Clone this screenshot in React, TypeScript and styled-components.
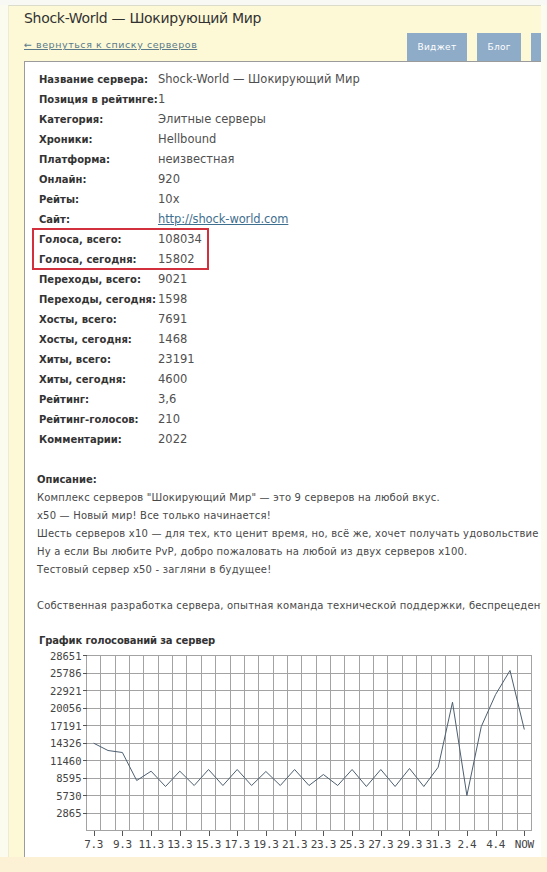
import React from "react";
import styled, { createGlobalStyle } from "styled-components";

const GlobalStyle = createGlobalStyle`
  html, body {
    margin: 0;
    padding: 0;
    background: #fdf1d5;
  }
  body {
    font-family: "DejaVu Sans", Verdana, sans-serif;
  }
`;

const Page = styled.div`
  width: 547px;
  padding: 5px 0 0 8px;
  box-sizing: border-box;
  background: linear-gradient(#f8f8f4 0 5px, #fcfbef 5px);
  overflow: hidden;
`;

const Sheet = styled.div`
  width: 533px;
  box-sizing: border-box;
  background: #fdf9d6;
  border-top: 1px solid #dcdccc;
  border-left: 1px solid #ecebd6;
  padding-left: 15px;
  overflow: hidden;
`;

const Header = styled.div`
  display: flex;
  align-items: flex-end;
`;

const TitleBlock = styled.div`
  flex: 0 0 383px;
  padding-top: 3px;
`;

const Title = styled.h1`
  margin: 0;
  font-size: 14px;
  line-height: 18px;
  font-weight: normal;
  color: #333;
  font-family: "DejaVu Sans", Verdana, sans-serif;
  letter-spacing: -0.3px;
`;

const BackLink = styled.a`
  display: block;
  margin: 11px 0 9px;
  font-size: 9.5px;
  line-height: 14px;
  color: #5a7a8c;
  text-decoration: underline;
  letter-spacing: 0.55px;
`;

const Tabs = styled.div`
  display: flex;
  gap: 10px;
  flex-shrink: 0;
`;

const Tab = styled.div`
  height: 28px;
  padding: 0 10.5px;
  display: flex;
  align-items: center;
  background: #8eabc7;
  color: #fff;
  font-size: 9px;
  letter-spacing: 0.3px;
  white-space: nowrap;
`;

const Panel = styled.div`
  width: 517px;
  box-sizing: border-box;
  background: #fff;
  border-top: 1px solid #9b9b9b;
  border-left: 1px solid #9b9b9b;
  padding: 7px 0 0 12px;
  overflow: hidden;
`;

const Row = styled.div`
  display: flex;
  height: 20px;
  align-items: center;
  padding-left: 2px;
`;

const Label = styled.div`
  width: 119px;
  flex-shrink: 0;
  font-size: 10px;
  font-weight: bold;
  color: #333;
  white-space: nowrap;
`;

const Value = styled.div`
  font-size: 11.5px;
  color: #505050;
  white-space: nowrap;
`;

const SiteLink = styled.a`
  color: #3f6f8f;
  text-decoration: underline;
  letter-spacing: -0.1px;
`;

const Highlight = styled.div`
  width: 175px;
  margin-left: -4px;
  padding-left: 4px;
  outline: 2px solid #d2303c;
  outline-offset: -1px;
  box-sizing: border-box;
`;

const Description = styled.div`
  margin-top: 22px;
  font-size: 10px;
  line-height: 18px;
  color: #484848;
  white-space: nowrap;
  letter-spacing: 0.2px;
`;

const SectionTitle = styled.div`
  font-size: 10px;
  font-weight: bold;
  color: #333;
  letter-spacing: 0;
`;

const ChartTitle = styled(SectionTitle)`
  margin-top: 19px;
  padding-left: 2px;
  line-height: 14px;
  letter-spacing: -0.15px;
`;

const ChartSvg = styled.svg`
  display: block;
  margin-left: 2px;
`;

type Info = { label: string; value: React.ReactNode };

const info: Info[] = [
  { label: "Название сервера:", value: "Shock-World — Шокирующий Мир" },
  { label: "Позиция в рейтинге:", value: "1" },
  { label: "Категория:", value: "Элитные серверы" },
  { label: "Хроники:", value: "Hellbound" },
  { label: "Платформа:", value: "неизвестная" },
  { label: "Онлайн:", value: "920" },
  { label: "Рейты:", value: "10x" },
  { label: "Сайт:", value: <SiteLink href="#">http://shock-world.com</SiteLink> },
];

const votes: Info[] = [
  { label: "Голоса, всего:", value: "108034" },
  { label: "Голоса, сегодня:", value: "15802" },
];

const stats: Info[] = [
  { label: "Переходы, всего:", value: "9021" },
  { label: "Переходы, сегодня:", value: "1598" },
  { label: "Хосты, всего:", value: "7691" },
  { label: "Хосты, сегодня:", value: "1468" },
  { label: "Хиты, всего:", value: "23191" },
  { label: "Хиты, сегодня:", value: "4600" },
  { label: "Рейтинг:", value: "3,6" },
  { label: "Рейтинг-голосов:", value: "210" },
  { label: "Комментарии:", value: "2022" },
];

const descLines = [
  'Комплекс серверов "Шокирующий Мир" — это 9 серверов на любой вкус.',
  "x50 — Новый мир! Все только начинается!",
  "Шесть серверов x10 — для тех, кто ценит время, но, всё же, хочет получать удовольствие от игры.",
  "Ну а если Вы любите PvP, добро пожаловать на любой из двух серверов x100.",
  "Тестовый сервер x50 - загляни в будущее!",
  "",
  "Собственная разработка сервера, опытная команда технической поддержки, беспрецедентная стабильность.",
];

const voteData = [
  14293, 13098, 12770, 8186, 9709, 7204, 9709, 7367, 9987, 7367, 9987, 7367,
  9660, 7367, 9987, 7367, 9168, 7367, 9987, 7204, 9987, 7204, 10151, 7204,
  10364, 21005, 5730, 17027, 22266, 26195, 16536,
];

const xLabels: Record<number, string> = {
  0: "7.3",
  2: "9.3",
  4: "11.3",
  6: "13.3",
  8: "15.3",
  10: "17.3",
  12: "19.3",
  14: "21.3",
  16: "23.3",
  18: "25.3",
  20: "27.3",
  22: "29.3",
  24: "31.3",
  26: "2.4",
  28: "4.4",
  30: "NOW",
};

const yLabels = [28651, 25786, 22921, 20056, 17191, 14326, 11460, 8595, 5730, 2865];

const VoteChart = () => {
  const left = 47.5;
  const right = 492.5;
  const top = 7.5;
  const bottom = 182.5;
  const max = 28651;
  const cell = (right - left) / voteData.length;
  const rowH = (bottom - top) / 10;
  const px = (i: number) => left + cell * (i + 0.5);
  const py = (v: number) => bottom - (v / max) * (bottom - top);

  const points = voteData.map((v, i) => `${px(i).toFixed(1)},${py(v).toFixed(1)}`).join(" ");

  return (
    <ChartSvg width={500} height={209}>
      <g stroke="#a3a3a3" strokeWidth={1} shapeRendering="crispEdges">
        {voteData.map((_, i) => (
          <line key={`v${i}`} x1={left + cell * i} x2={left + cell * i} y1={top} y2={bottom} />
        ))}
        <line x1={right} x2={right} y1={top} y2={bottom} />
        {Array.from({ length: 11 }).map((_, k) => (
          <line key={`h${k}`} x1={left} x2={right} y1={top + rowH * k} y2={top + rowH * k} />
        ))}
      </g>
      <g stroke="#555" strokeWidth={1} shapeRendering="crispEdges">
        {yLabels.map((_, k) => (
          <line key={`yt${k}`} x1={left - 4} x2={left} y1={top + rowH * k} y2={top + rowH * k} />
        ))}
        {Object.keys(xLabels).map((k) => (
          <line key={`xt${k}`} x1={Math.round(px(+k)) + 0.5} x2={Math.round(px(+k)) + 0.5} y1={bottom} y2={bottom + 5} />
        ))}
      </g>
      <g fontFamily='"DejaVu Sans Mono", monospace' fill="#444" fontSize={10.5}>
        {yLabels.map((v, k) => (
          <text key={`yl${k}`} x={left - 5} y={top + rowH * k + 4} textAnchor="end">
            {v}
          </text>
        ))}
        {Object.entries(xLabels).map(([k, t]) => (
          <text key={`xl${k}`} x={px(+k)} y={200} textAnchor="middle" fontSize={11} letterSpacing={-0.3}>
            {t}
          </text>
        ))}
      </g>
      <polyline points={points} fill="none" stroke="#4d5f70" strokeWidth={1} />
    </ChartSvg>
  );
};

const renderRow = (r: Info) => (
  <Row key={r.label}>
    <Label>{r.label}</Label>
    <Value>{r.value}</Value>
  </Row>
);

const App = () => (
  <Page>
    <GlobalStyle />
    <Sheet>
      <Header>
        <TitleBlock>
          <Title>Shock-World — Шокирующий Мир</Title>
          <BackLink href="#">← вернуться к списку серверов</BackLink>
        </TitleBlock>
        <Tabs>
          <Tab>Виджет</Tab>
          <Tab>Блог</Tab>
          <Tab>Отзывы</Tab>
        </Tabs>
      </Header>
      <Panel>
        {info.map(renderRow)}
        <Highlight>{votes.map(renderRow)}</Highlight>
        {stats.map(renderRow)}
        <Description>
          <SectionTitle>Описание:</SectionTitle>
          {descLines.map((line, i) => (
            <div key={i}>{line || "\u00a0"}</div>
          ))}
        </Description>
        <ChartTitle>График голосований за сервер</ChartTitle>
        <VoteChart />
      </Panel>
    </Sheet>
  </Page>
);

export default App;
